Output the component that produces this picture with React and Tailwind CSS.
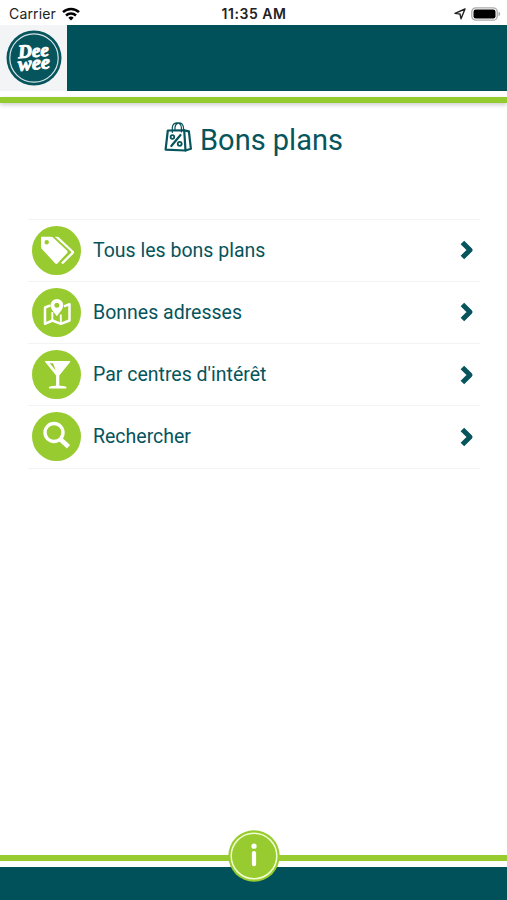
import React from 'react';

const TagsIcon = () => (
  <svg viewBox="0 0 49 49" className="h-full w-full">
    <path
      fill="#fff"
      fillRule="evenodd"
      d="M9.500 10.800h9.500c.8 0 1.500.3 2 .8l14.200 13.200c.6.6.6 1.500 0 2.100l-9.800 10.600c-.6.6-1.500.6-2.100 0L9.900 23c-.6-.6-.9-1.200-.9-2v-9.600c0-.4.200-.600.500-.600zM14.700 14a2.200 2.200 0 1 0 0 4.400 2.200 2.200 0 0 0 0-4.400z"
    />
    <path d="M22.800 10.800h2.500c.7 0 1.200.2 1.700.7l14.700 13.800c.6.6.6 1.400 0 2.100l-10 10.200c-.6.600-1.300.5-1.800 0l-.8-.8 9.800-9.900c.5-.5.500-1 0-1.500z" fill="#fff" />
  </svg>
);

const MapIcon = () => (
  <svg viewBox="0 0 49 49" className="h-full w-full" fill="none" stroke="#fff" strokeWidth="2.500" strokeLinejoin="round">
    <path d="M18.500 17.300 13 19.500v16.300l7.400-3.300 8.400 3.300 8.700-3.300V16.200l-5.500 2.200" />
    <path d="M20.300 24v8M28.800 26.500v9" strokeWidth="1.900" />
    <path
      d="M24.900 11a6.300 6.300 0 0 0-6.300 6.300c0 4.100 3.500 6.900 6.300 10.900 2.800-4 6.300-6.800 6.300-10.900a6.300 6.300 0 0 0-6.300-6.300zm0 3.800a2.500 2.500 0 1 1 0 5 2.500 2.500 0 0 1 0-5z"
      fill="#fff"
      fillRule="evenodd"
      stroke="none"
    />
  </svg>
);

const CocktailIcon = () => (
  <svg viewBox="0 0 49 49" className="h-full w-full">
    <path
      fill="#fff"
      fillRule="evenodd"
      d="M13.500 11h24.300c.5 0 .7.600.3 1L27.300 25.400v10.200c1 .5 6.600.4 7.200 1.600.4 1-.5 1.400-1.500 1.400H18.400c-1 0-1.900-.4-1.500-1.400.6-1.200 6.200-1.100 7.200-1.600V25.400L13.200 12c-.4-.4-.2-1 .3-1zm4.300 2.300 5.900 7.200-2.600-7.200z"
    />
  </svg>
);

const SearchIcon = () => (
  <svg viewBox="0 0 49 49" className="h-full w-full" fill="none" stroke="#fff">
    <circle cx="22" cy="20.500" r="9" strokeWidth="3.400" />
    <path d="m28.300 27.300 8.200 7.500" strokeWidth="4.600" />
  </svg>
);

const BagIcon = () => (
  <svg viewBox="0 0 28 32" className="h-8 w-7" fill="none" stroke="#06545c" strokeWidth="2.200" strokeLinejoin="round" strokeLinecap="round">
    <path d="M3.800 9.500 20.200 9.300l1.300 20.200-19.900-.9z" />
    <path d="m20.200 9.300 4.700 1 2 17.500-5.400 1.700" />
    <path d="M8.300 11.500V6.500a5 5 0 0 1 4.500-4.700c2.700 0 4.300 2.200 4.600 4.700V11M11 9V6.200c.2-2 1.300-3.500 3.200-4.300 3.300-.4 5 1.800 5.300 4.600v3" strokeWidth="1.200" />
    <path d="m16.500 14-9.200 11" />
    <circle cx="8.400" cy="16" r="1.800" strokeWidth="1.800" />
    <circle cx="15.700" cy="22.800" r="2" strokeWidth="1.800" />
  </svg>
);

const Logo = () => (
  <svg viewBox="0 0 56 56" className="h-14 w-14">
    <circle cx="28" cy="28" r="27.500" fill="#06545c" />
    <circle cx="28" cy="28" r="24.200" fill="none" stroke="#d5e5e7" strokeWidth="1.200" />
    <g
      transform="rotate(-5 28 28)"
      fill="#fff"
      stroke="#fff"
      strokeWidth=".9"
      fontFamily="'Liberation Serif', serif"
      fontWeight="700"
      fontStyle="italic"
    >
      <text x="12.500" y="27" fontSize="19" textLength="31" lengthAdjust="spacingAndGlyphs">Dee</text>
      <text x="11.500" y="39.500" fontSize="20" textLength="32" lengthAdjust="spacingAndGlyphs">wee</text>
    </g>
  </svg>
);

const StatusBar = () => (
  <div className="grid h-[25px] grid-cols-3 items-center pl-[9px] pr-[6px] pt-[2px] text-[14px] text-[#222]">
    <div className="flex items-center gap-[6px]">
      <span className="tracking-[0.15px]">Carrier</span>
      <svg viewBox="0 0 18 14" className="h-[14px] w-[18px]" fill="none" stroke="#000" strokeWidth="2.500">
        <path d="M1 5.200a11.500 11.500 0 0 1 16 0M4 8.500a7.300 7.300 0 0 1 10 0" />
        <path d="M6.300 10.800a4 4 0 0 1 5.400 0L9 13.600z" fill="#000" stroke="none" />
      </svg>
    </div>
    <span className="pr-[2px] text-center text-[14px] font-semibold tracking-[0.550px]">11:35 AM</span>
    <div className="flex items-center justify-end gap-[5px]">
      <svg viewBox="0 0 12 12" className="h-3 w-3" fill="none" stroke="#222" strokeWidth="1.400" strokeLinejoin="round">
        <path d="M11 1 1 5.400l5 .600 1 4.700z" />
      </svg>
      <svg viewBox="0 0 30 14" className="h-[14px] w-[30px]">
        <rect x=".8" y=".8" width="25.400" height="12.400" rx="4" fill="#fff" stroke="#aaa" strokeWidth="1.300" />
        <rect x="2.500" y="2.500" width="22" height="9" rx="2.300" fill="#000" />
        <path d="M27.500 4.800c2.200.7 2.200 3.700 0 4.400z" fill="#aaa" />
      </svg>
    </div>
  </div>
);

const items = [
  { label: 'Tous les bons plans', Icon: TagsIcon },
  { label: 'Bonnes adresses', Icon: MapIcon },
  { label: "Par centres d'intérêt", Icon: CocktailIcon },
  { label: 'Rechercher', Icon: SearchIcon },
];

const MenuRow = ({ label, Icon }) => (
  <li className="flex h-[62.250px] items-center border-b border-[#f3f3f3] pl-[3.500px] pr-[6.500px]">
    <span className="h-[49px] w-[49px] shrink-0 rounded-full bg-[#98cb2f]">
      <Icon />
    </span>
    <span className="ml-[12.500px] flex-1 text-[19.500px]">{label}</span>
    <svg viewBox="0 0 14 20" className="h-5 w-[14px]" fill="none" stroke="#06545c" strokeWidth="5" strokeLinejoin="round">
      <path d="m2.400 2.400 7.600 7.600-7.600 7.600" />
    </svg>
  </li>
);

export default function App() {
  return (
    <div className="flex h-[900px] w-[507px] flex-col overflow-hidden bg-white font-['Roboto',sans-serif] text-[#06545c]">
      <div className="font-['Inter',sans-serif]">
        <StatusBar />
      </div>

      <header>
        <div className="flex h-[66px] bg-[#00515a]">
          <div className="flex w-[67px] items-center justify-center bg-[#f3f4f5] pl-[1px]">
            <Logo />
          </div>
        </div>
        <div className="mt-[6px] h-[6px] bg-[#94cb2e] shadow-[0_2px_4px_rgba(0,0,0,0.2)]" />
      </header>

      <main className="flex-1">
        <h1 className="mt-[16px] flex h-[40px] items-center justify-center gap-[8px] text-[29px]">
          <span className="-mt-[4px]">
            <BagIcon />
          </span>
          <span className="pt-[3px]">Bons plans</span>
        </h1>
        <ul className="ml-[28px] mr-[27px] mt-[59.500px] border-t border-[#f3f3f3]">
          {items.map((item) => (
            <MenuRow key={item.label} {...item} />
          ))}
        </ul>
      </main>

      <footer className="relative">
        <div className="h-[6px] bg-[#98cb2f]" />
        <div className="mt-[6px] h-[33px] bg-[#00515a]" />
        <button aria-label="Info" className="absolute left-[228px] top-[-25px] h-[52px] w-[52px]">
          <svg viewBox="0 0 52 52" className="h-full w-full">
            <circle cx="26" cy="26" r="25.700" fill="#98cb2f" />
            <circle cx="26" cy="26" r="22.800" fill="none" stroke="#f0ffd0" strokeWidth="1.500" />
            <circle cx="26" cy="16.200" r="2.600" fill="#fff" />
            <path d="M26 23.200v11" stroke="#fff" strokeWidth="4.200" strokeLinecap="round" />
          </svg>
        </button>
      </footer>
    </div>
  );
}
